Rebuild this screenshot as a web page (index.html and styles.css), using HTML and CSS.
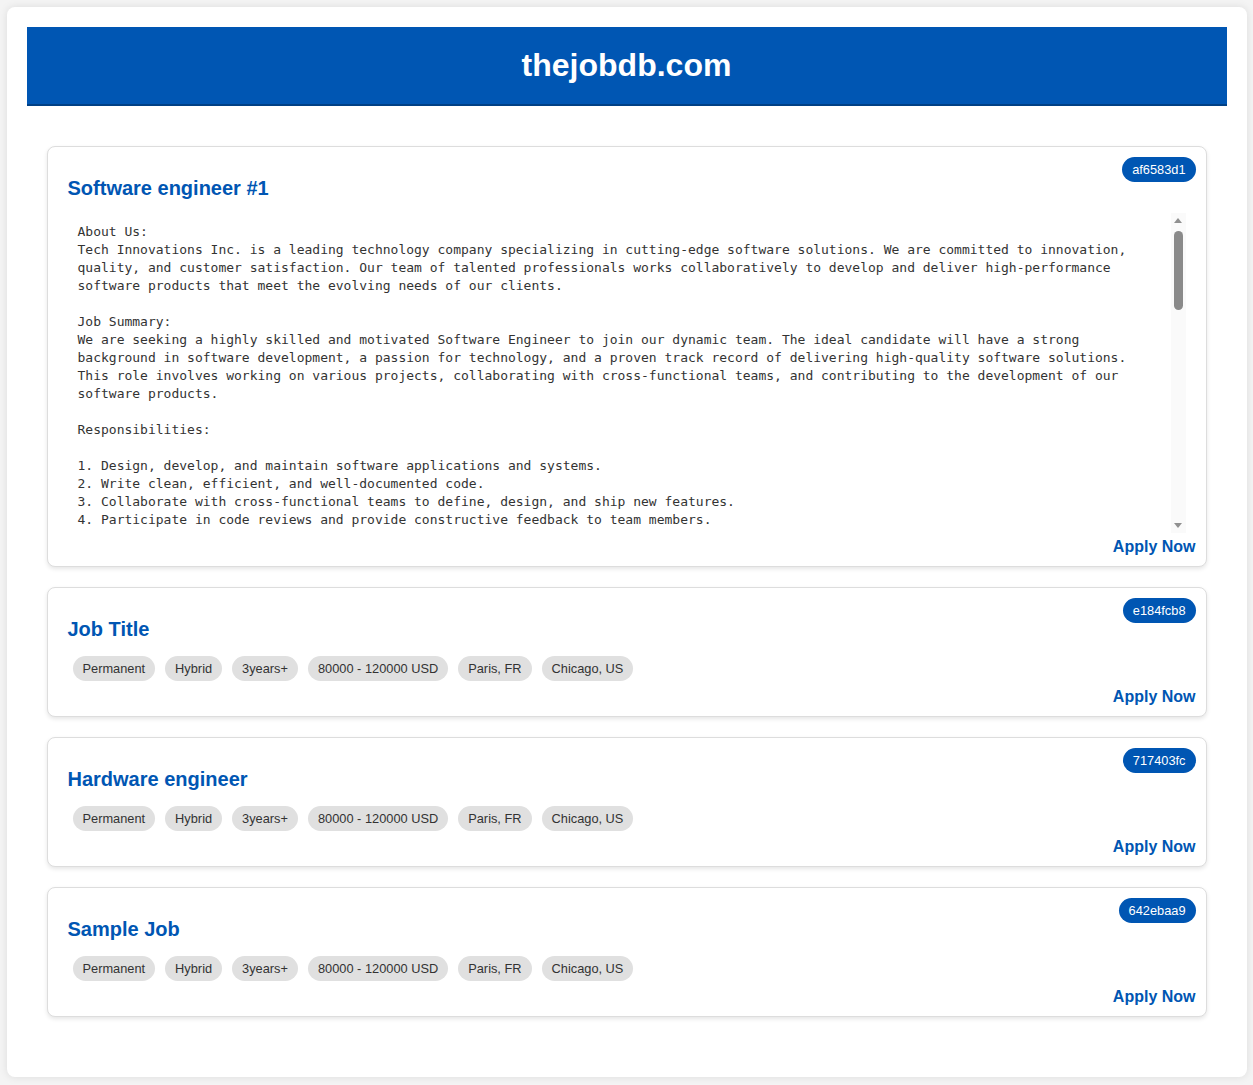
FILE: index.html
```html
<!DOCTYPE html>
<html lang="en">
<head>
<meta charset="utf-8">
<title>thejobdb.com</title>
<link rel="stylesheet" href="styles.css">
</head>
<body>
<div class="container">
  <header class="site-header">
    <h1 class="site-title">thejobdb.com</h1>
  </header>
  <main class="jobs">
    <article class="job-card">
      <span class="job-id">af6583d1</span>
      <h2 class="job-title">Software engineer #1</h2>
      <div class="desc-box">
        <pre class="job-desc">About Us:
Tech Innovations Inc. is a leading technology company specializing in cutting-edge software solutions. We are committed to innovation, quality, and customer satisfaction. Our team of talented professionals works collaboratively to develop and deliver high-performance software products that meet the evolving needs of our clients.

Job Summary:
We are seeking a highly skilled and motivated Software Engineer to join our dynamic team. The ideal candidate will have a strong background in software development, a passion for technology, and a proven track record of delivering high-quality software solutions. This role involves working on various projects, collaborating with cross-functional teams, and contributing to the development of our software products.

Responsibilities:

1. Design, develop, and maintain software applications and systems.
2. Write clean, efficient, and well-documented code.
3. Collaborate with cross-functional teams to define, design, and ship new features.
4. Participate in code reviews and provide constructive feedback to team members.
5. Troubleshoot, debug, and resolve software defects and issues.
6. Stay up-to-date with emerging technologies and industry trends.
7. Contribute to the continuous improvement of development processes and tools.
8. Mentor junior engineers and share knowledge across the team.

Qualifications:

1. Bachelor's degree in Computer Science, Software Engineering, or a related field.
2. 3+ years of professional experience in software development.
3. Proficiency in one or more programming languages such as Java, Python, C#, or JavaScript.
4. Experience with modern frameworks and libraries for web and backend development.
5. Solid understanding of data structures, algorithms, and software design patterns.
6. Familiarity with version control systems such as Git.
7. Experience with relational and non-relational databases.
8. Strong problem-solving skills and attention to detail.
9. Excellent communication and teamwork skills.</pre>
        <div class="scrollbar" aria-hidden="true">
          <span class="sb-btn">
            <svg width="8" height="5" viewBox="0 0 8 5"><path d="M0 5L4 0L8 5z" fill="#909090"/></svg>
          </span>
          <span class="sb-track"><span class="sb-thumb"></span></span>
          <span class="sb-btn">
            <svg width="8" height="5" viewBox="0 0 8 5"><path d="M0 0L4 5L8 0z" fill="#909090"/></svg>
          </span>
        </div>
      </div>
      <a class="apply-link" href="#">Apply Now</a>
    </article>

    <article class="job-card">
      <span class="job-id">e184fcb8</span>
      <h2 class="job-title">Job Title</h2>
      <div class="tags">
        <span class="tag">Permanent</span>
        <span class="tag">Hybrid</span>
        <span class="tag">3years+</span>
        <span class="tag">80000 - 120000 USD</span>
        <span class="tag">Paris, FR</span>
        <span class="tag">Chicago, US</span>
      </div>
      <a class="apply-link" href="#">Apply Now</a>
    </article>

    <article class="job-card">
      <span class="job-id">717403fc</span>
      <h2 class="job-title">Hardware engineer</h2>
      <div class="tags">
        <span class="tag">Permanent</span>
        <span class="tag">Hybrid</span>
        <span class="tag">3years+</span>
        <span class="tag">80000 - 120000 USD</span>
        <span class="tag">Paris, FR</span>
        <span class="tag">Chicago, US</span>
      </div>
      <a class="apply-link" href="#">Apply Now</a>
    </article>

    <article class="job-card">
      <span class="job-id">642ebaa9</span>
      <h2 class="job-title">Sample Job</h2>
      <div class="tags">
        <span class="tag">Permanent</span>
        <span class="tag">Hybrid</span>
        <span class="tag">3years+</span>
        <span class="tag">80000 - 120000 USD</span>
        <span class="tag">Paris, FR</span>
        <span class="tag">Chicago, US</span>
      </div>
      <a class="apply-link" href="#">Apply Now</a>
    </article>
  </main>
</div>
</body>
</html>
```

FILE: styles.css
```css
* {
  box-sizing: content-box;
}

html, body {
  margin: 0;
  padding: 0;
}

body {
  background: #f4f4f4;
  font-family: "Liberation Sans", Arial, sans-serif;
  color: #333;
  padding: 7px 0;
}

.container {
  max-width: 1200px;
  margin: 0 auto;
  padding: 20px;
  background: #fff;
  border-radius: 8px;
  box-shadow: 0 0 8px rgba(0, 0, 0, 0.1);
}

.site-header {
  background: #0056b3;
  color: #fff;
  padding: 20px;
  text-align: center;
  border-bottom: 2px solid #004085;
}

.site-title {
  margin: 0;
  font-size: 32px;
  line-height: 37px;
  font-weight: bold;
}

.jobs {
  padding: 20px;
}

.job-card {
  position: relative;
  margin: 20px 0;
  padding: 20px 20px 10px 20px;
  border: 1px solid #ddd;
  border-radius: 8px;
  background: #fff;
  box-shadow: 0 2px 4px rgba(0, 0, 0, 0.1);
}

.job-id {
  position: absolute;
  top: 10px;
  right: 10px;
  background: #0056b3;
  color: #fff;
  font-size: 12.8px;
  line-height: 15px;
  padding: 5px 10px;
  border-radius: 13px;
}

.job-title {
  margin: 10px 0;
  color: #0056b3;
  font-size: 20px;
  line-height: 23px;
  font-weight: bold;
}

.desc-box {
  display: flex;
  margin: 13px 0 5px 0;
  height: 320px;
}

.job-desc {
  flex: 1;
  min-width: 0;
  margin: 0;
  padding: 10px;
  height: 300px;
  overflow: hidden;
  clip-path: inset(0 0 5px 0);
  white-space: pre-wrap;
  font-family: "DejaVu Sans Mono", monospace;
  font-size: 13px;
  line-height: 18px;
  color: #333;
}

.scrollbar {
  display: flex;
  flex-direction: column;
  width: 15px;
  background: #fafafa;
}

.sb-btn {
  display: flex;
  align-items: center;
  justify-content: center;
  height: 15px;
}

.sb-btn svg {
  display: block;
}

.sb-track {
  flex: 1;
  padding: 3px;
}

.sb-thumb {
  display: block;
  height: 79px;
  background: #8a8a8a;
  border-radius: 5px;
}

.tags {
  display: flex;
  flex-wrap: wrap;
  margin: 0 0 2px 0;
}

.tag {
  margin: 5px;
  padding: 5px 10px;
  background: #e0e0e0;
  color: #333;
  font-size: 12.8px;
  line-height: 15px;
  border-radius: 13px;
}

.apply-link {
  display: block;
  text-align: right;
  margin-right: -10px;
  color: #0056b3;
  font-weight: bold;
  font-size: 16px;
  line-height: 18px;
  text-decoration: none;
}
```
